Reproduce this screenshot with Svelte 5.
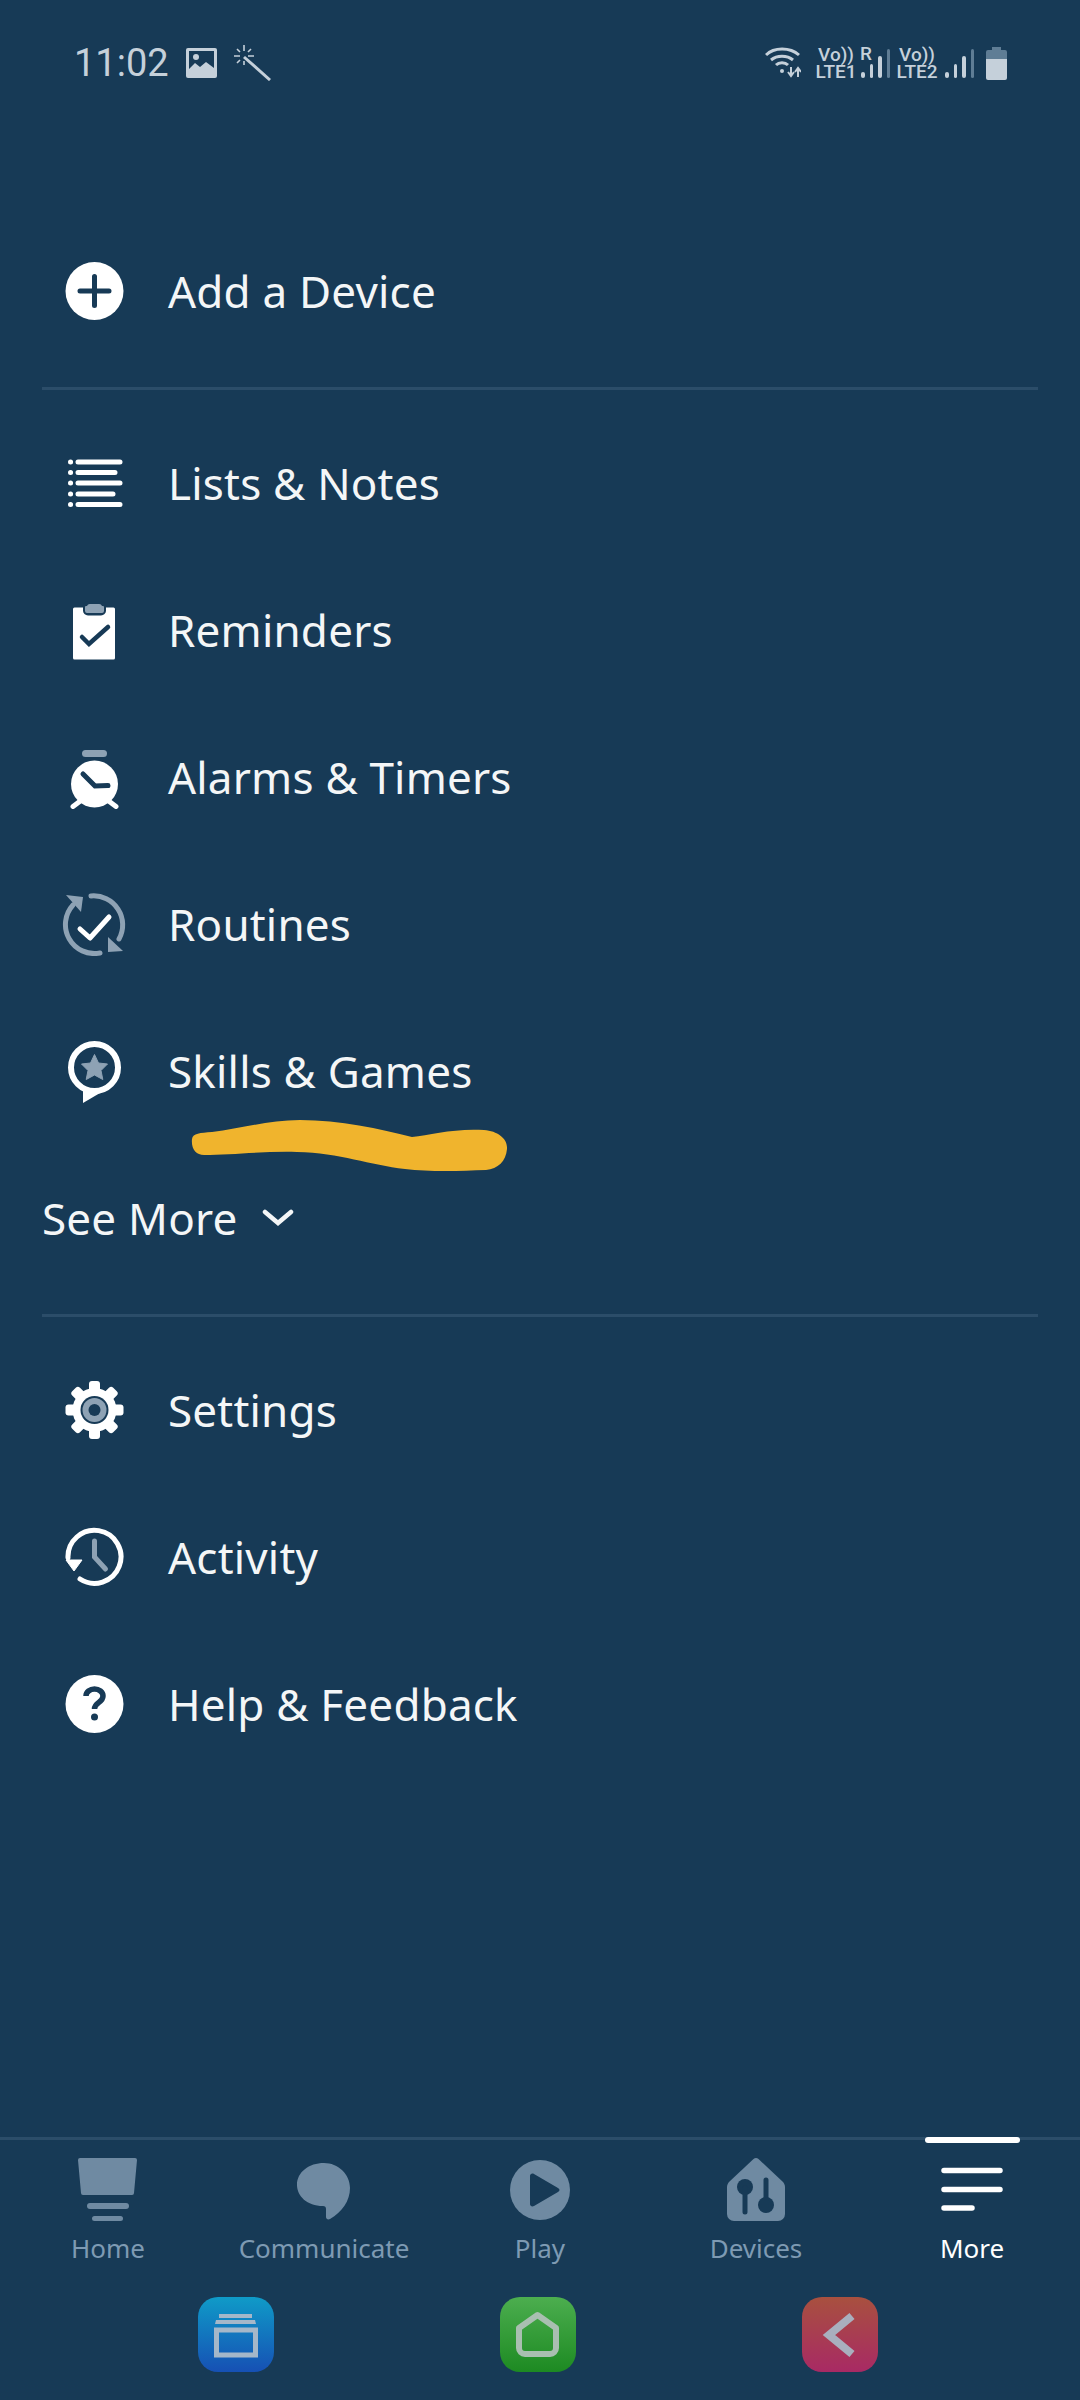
<script>
  const tabs = ["Home", "Communicate", "Play", "Devices", "More"];
</script>

<div class="page">
  <div class="status">
    <div class="status-left">
      <span class="time">11:02</span>
      <svg class="pic" width="31" height="30" viewBox="0 0 31 30">
        <rect width="31" height="30" rx="2" fill="#c5d0da" />
        <rect x="3" y="3" width="25" height="24" fill="#173a56" />
        <path d="M3 21l6-6 5 4 6-5 8 6v7H3z" fill="#c5d0da" />
        <circle cx="10" cy="9" r="3" fill="#c5d0da" />
      </svg>
      <svg class="wand" width="38" height="36" viewBox="0 0 38 36" stroke="#c5d0da" fill="none">
        <path d="M10 12L36 35" stroke-width="3" />
        <path d="M10 0v6M10 16v4M0 11h6M14 11h6M3 4l3 3M17 4l-3 3M3 18l3-3" stroke-width="1.6" />
      </svg>
    </div>
    <div class="status-right">
      <svg width="36" height="32" viewBox="0 0 36 32" fill="none" stroke="#c5d0da" stroke-width="3">
        <path d="M1 8C9 0 25 0 34 8M6 13c6-5 16-5 22 0M11 18c3-3 9-3 12 0" />
        <circle cx="17" cy="24" r="2" fill="#c5d0da" stroke="none" />
        <path d="M26 20v8M23 25l3 4 3-4M33 30v-8M30 25l3-4 3 4" stroke-width="2" />
      </svg>
      <div class="sim first-sim"><span>Vo))</span><span>LTE1</span></div>
      <div class="signal">
        <span class="roam">R</span>
        <div class="bars"><i style="height:6px"></i><i style="height:14px"></i><i style="height:22px"></i><i class="off" style="height:29px"></i></div>
      </div>
      <div class="sim second-sim"><span>Vo))</span><span>LTE2</span></div>
      <div class="bars lone"><i style="height:6px"></i><i style="height:14px"></i><i style="height:22px"></i><i class="off" style="height:29px"></i></div>
      <svg class="batt" width="21" height="33" viewBox="0 0 21 33">
        <path d="M6 0h9v3h4a2 2 0 0 1 2 2v7H0V5a2 2 0 0 1 2-2h4z" fill="#5f7d95" />
        <path d="M0 12h21v19a2 2 0 0 1-2 2H2a2 2 0 0 1-2-2z" fill="#c5d0da" />
      </svg>
    </div>
  </div>

  <div class="menu">
    <div class="row first">
      <svg class="icon" viewBox="0 0 64 64">
        <circle cx="32.500" cy="32" r="29" fill="#fff" />
        <path d="M18 32h29M32.500 17.500v29" stroke="#173a56" stroke-width="5" stroke-linecap="round" />
      </svg>
      <span>Add a Device</span>
    </div>
    <div class="divider"></div>

    <div class="row">
      <svg class="icon" viewBox="0 0 64 64" stroke="#fff" stroke-width="5" stroke-linecap="round">
        <path d="M16 11h42M16 21.5h37M16 32h42M16 43h35M16 53.500h42" />
        <path d="M8.500 11h.1M8.500 21.500h.1M8.500 32h.1M8.500 43h.1M8.500 53.500h.1" />
      </svg>
      <span>Lists &amp; Notes</span>
    </div>
    <div class="row">
      <svg class="icon" viewBox="0 0 64 64">
        <path d="M11 11a1.500 1.500 0 0 1 1.500-1.500h39a1.500 1.500 0 0 1 1.500 1.500v49a1.500 1.500 0 0 1-1.500 1.500h-39A1.500 1.500 0 0 1 11 60z" fill="#fff" />
        <rect x="21" y="3.500" width="23" height="14" rx="5" fill="#173a56" />
        <path d="M25 8a3 3 0 0 1 3-2h9a3 3 0 0 1 3 2h1a1 1 0 0 1 1 1v4a2 2 0 0 1-2 2H25a2 2 0 0 1-2-2V9a1 1 0 0 1 1-1z" fill="#8ea2b4" />
        <path d="M20 38l7 7 19-17" transform="translate(0 1)" fill="none" stroke="#173a56" stroke-width="4.500" stroke-linecap="round" />
      </svg>
      <span>Reminders</span>
    </div>
    <div class="row">
      <svg class="icon" viewBox="0 0 64 64">
        <rect x="20" y="5" width="25" height="7" rx="3.500" fill="#8ea2b4" />
        <circle cx="32.500" cy="39" r="23.500" fill="#fff" />
        <path d="M21 29l12 12 13-.5" fill="none" stroke="#173a56" stroke-width="5" stroke-linecap="round" />
        <path d="M11 61.500l8-6M54 61.500l-8-6" stroke="#fff" stroke-width="5" stroke-linecap="round" />
      </svg>
      <span>Alarms &amp; Timers</span>
    </div>
    <div class="row">
      <svg class="icon" viewBox="0 0 64 64" fill="none">
        <path d="M11 13A29 29 0 0 0 38 61" stroke="#8ea2b4" stroke-width="5" stroke-linecap="round" />
        <path d="M4 3l17 2-2 15z" fill="#8ea2b4" />
        <path d="M29 4A29 29 0 0 1 57 47" stroke="#8ea2b4" stroke-width="5" stroke-linecap="round" />
        <path d="M46 45l15 14-15 1z" fill="#8ea2b4" />
        <path d="M18 37l10 9 19-21" stroke="#fff" stroke-width="5" stroke-linecap="round" stroke-linejoin="round" />
      </svg>
      <span>Routines</span>
    </div>
    <div class="row">
      <svg class="icon" viewBox="0 0 64 64">
        <circle cx="32.500" cy="28.500" r="23.500" fill="none" stroke="#fff" stroke-width="6" />
        <path d="M21 48v16l17-10z" fill="#fff" />
        <path d="M32.500 15.500l4 8.500 9 1-6.500 6.500 1.800 9-8.300-4.500-8.300 4.500 1.800-9-6.500-6.500 9-1z" fill="#8ea2b4" stroke="#8ea2b4" stroke-linejoin="round" />
      </svg>
      <span>Skills &amp; Games</span>
    </div>
    <div class="row see">
      <span>See More</span>
      <svg width="32" height="20" viewBox="0 0 32 20" fill="none" stroke="#f4f6f7" stroke-width="4.500" stroke-linecap="round">
        <path d="M3 4l13 11 13-11" />
      </svg>
    </div>
    <div class="divider second"></div>

    <div class="row">
      <svg class="icon" viewBox="0 0 64 64">
        <g fill="#fff">
          <circle cx="32.500" cy="32" r="22" />
          <rect x="27" y="3" width="11" height="58" rx="3" />
          <rect x="27" y="3" width="11" height="58" rx="3" transform="rotate(45 32.500 32)" />
          <rect x="27" y="3" width="11" height="58" rx="3" transform="rotate(90 32.500 32)" />
          <rect x="27" y="3" width="11" height="58" rx="3" transform="rotate(135 32.500 32)" />
        </g>
        <circle cx="32.500" cy="32" r="14" fill="#173a56" />
        <circle cx="32.500" cy="32" r="12" fill="#8ea2b4" />
        <circle cx="32.500" cy="32" r="6" fill="#173a56" />
      </svg>
      <span>Settings</span>
    </div>
    <div class="row">
      <svg class="icon" viewBox="0 0 64 64" fill="none">
        <path d="M6 33A26.500 26.500 0 1 1 18 54" stroke="#fff" stroke-width="5" stroke-linecap="round" />
        <path d="M4 35h16l-8 11z" fill="#fff" stroke="#fff" stroke-linejoin="round" stroke-width="1" />
        <path d="M32.500 16v16l11 12" stroke="#8ea2b4" stroke-width="5" stroke-linecap="round" />
      </svg>
      <span>Activity</span>
    </div>
    <div class="row">
      <svg class="icon" viewBox="0 0 64 64" fill="none">
        <circle cx="32.500" cy="32" r="29" fill="#fff" />
        <path d="M24 24c0-4 4-7 8.500-7s8.500 3 8.500 7c0 7-8.500 6-8.500 13" stroke="#173a56" stroke-width="5.500" />
        <circle cx="32.500" cy="45" r="3.500" fill="#173a56" />
      </svg>
      <span>Help &amp; Feedback</span>
    </div>
  </div>

  <div class="bottom">
    <div class="tabs">
      {#each tabs as tab}
        <div class="tab" class:active={tab === "More"}>
          <svg width="64" height="64" viewBox="0 0 64 64">
            {#if tab === "Home"}
              <path d="M4 0h55a2 2 0 0 1 2 2l-3 33a2 2 0 0 1-2 2H7a2 2 0 0 1-2-2L2 2a2 2 0 0 1 2-2z" fill="#6f8aa2" />
              <rect x="11" y="45" width="42" height="6" rx="3" fill="#6f8aa2" />
              <rect x="16" y="58" width="31" height="5" rx="2.500" fill="#6f8aa2" />
            {:else if tab === "Communicate"}
              <path d="M32 5c14 0 26 11 26 25 0 13-8 24-20 31-2 1-4 0-4-2v-8c0-2-1-3-3-3C15 48 5 38 5 27 5 14 17 5 32 5z" fill="#6f8aa2" />
            {:else if tab === "Play"}
              <circle cx="32" cy="32" r="30" fill="#6f8aa2" />
              <path d="M22 18c0-2 2-3 4-2l24 14c2 1 2 3 0 4L26 48c-2 1-4 0-4-2z" fill="#173a56" />
            {:else if tab === "Devices"}
              <path d="M29.500 1a4 4 0 0 1 5 0L59 24c1 1 2 3 2 5v27a7 7 0 0 1-7 7H10a7 7 0 0 1-7-7V29c0-2 1-4 2-5z" fill="#6f8aa2" />
              <circle cx="21" cy="29" r="8" fill="#173a56" />
              <path d="M21 30v24M42 22v25" stroke="#173a56" stroke-width="5" stroke-linecap="round" />
              <circle cx="42" cy="47" r="8" fill="#173a56" />
            {:else}
              <path d="M4 12.500h56M4 31.500h56M4 50h28" stroke="#fff" stroke-width="5.500" stroke-linecap="round" />
            {/if}
          </svg>
          <span>{tab}</span>
        </div>
      {/each}
      <div class="indicator"></div>
    </div>

    <div class="nav">
      <div class="nav-btn blue">
        <svg width="76" height="75" viewBox="0 0 76 75">
          <path d="M21 17h33v4H21zM18 23h39l1 4H17z" fill="#a5b7c9" />
          <rect x="18.500" y="33" width="39" height="25" fill="none" stroke="#a5b7c9" stroke-width="5" />
        </svg>
      </div>
      <div class="nav-btn green">
        <svg width="76" height="75" viewBox="0 0 76 75">
          <path d="M19 31L37.500 18 56 31v20a6 6 0 0 1-6 6H25a6 6 0 0 1-6-6z" fill="none" stroke="#a9bfb0" stroke-width="6" stroke-linejoin="round" />
        </svg>
      </div>
      <div class="nav-btn red">
        <svg width="76" height="75" viewBox="0 0 76 75">
          <path d="M50 19L27 38l23 19" fill="none" stroke="#a9afbe" stroke-width="8" />
        </svg>
      </div>
    </div>
  </div>

  <svg class="scribble" width="320" height="56" viewBox="0 0 320 56">
    <path d="M2 20C3 14 10 14 22 13 50 10 78 1 110 1 150 1 190 10 222 18 240 16 265 9 294 11 308 12 318 20 317 30 316 42 308 50 296 51 270 52 240 53 215 50 180 46 150 34 107 33 75 32 40 36 14 36 6 36 1 30 2 20z" fill="#f0b42d" />
  </svg>
</div>

<style>
  :global(body) {
    margin: 0;
    background: #173a56;
  }

  .page {
    position: relative;
    width: 1080px;
    height: 2400px;
    background: #173a56;
    display: flex;
    flex-direction: column;
    font-family: "Noto Sans", "Open Sans", sans-serif;
    color: #f4f6f7;
    overflow: hidden;
  }

  .status {
    height: 126px;
    padding: 0 73px 0 74px;
    box-sizing: border-box;
    display: flex;
    justify-content: space-between;
    align-items: center;
    color: #c5d0da;
    font-family: Roboto, sans-serif;
  }

  .status-left {
    display: flex;
    align-items: center;
  }

  .time {
    font-size: 38px;
    margin-right: 17px;
  }

  .wand {
    margin-left: 17px;
  }

  .status-right {
    display: flex;
    align-items: center;
  }

  .sim {
    display: flex;
    flex-direction: column;
    align-items: center;
    font-size: 19px;
    font-weight: 500;
    line-height: 17px;
    width: 42px;
    white-space: nowrap;
  }

  .first-sim {
    margin-left: 14px;
  }

  .second-sim {
    margin-left: 6px;
  }

  .signal {
    position: relative;
    width: 30px;
    height: 32px;
    margin-left: 3px;
  }

  .roam {
    position: absolute;
    left: 0;
    top: -3px;
    font-size: 19px;
    line-height: 19px;
    font-weight: 500;
  }

  .bars {
    position: absolute;
    right: 0;
    bottom: 1px;
    display: flex;
    align-items: flex-end;
    gap: 5px;
  }

  .bars.lone {
    position: static;
    margin-left: 7px;
  }

  .bars i {
    display: block;
    width: 3.500px;
    background: #c5d0da;
    border-radius: 2px;
  }

  .bars i.off {
    background: #5f7d95;
  }

  .batt {
    margin-left: 12px;
  }

  .menu {
    padding: 92px 42px 0;
    display: flex;
    flex-direction: column;
  }

  .row {
    height: 147px;
    display: flex;
    align-items: center;
    font-size: 44px;
    letter-spacing: 0.2px;
    flex-shrink: 0;
  }

  .row.first {
    height: 146px;
  }

  .icon {
    width: 64px;
    height: 64px;
    margin: 0 42px 0 20px;
    flex-shrink: 0;
  }

  .see svg {
    margin-left: 25px;
  }

  .divider {
    height: 3px;
    background: #2b4d69;
    margin: 23px 0 19px;
    flex-shrink: 0;
  }

  .divider.second {
    margin: 23px 0 19px;
  }

  .bottom {
    margin-top: auto;
    display: flex;
    flex-direction: column;
  }

  .tabs {
    position: relative;
    display: flex;
    border-top: 3px solid #2b4d69;
    padding-top: 18px;
  }

  .tab {
    width: 216px;
    display: flex;
    flex-direction: column;
    align-items: center;
    color: #7e9ab3;
    font-size: 26px;
  }

  .tab span {
    line-height: 36px;
    margin-top: 8px;
  }

  .tab.active {
    color: #fff;
  }

  .indicator {
    position: absolute;
    left: 925px;
    top: -3px;
    width: 95px;
    height: 6px;
    border-radius: 3px;
    background: #fff;
  }

  .nav {
    display: flex;
    justify-content: center;
    gap: 226px;
    padding: 31px 4px 28px 0;
  }

  .nav-btn {
    width: 76px;
    height: 75px;
    border-radius: 20px;
  }

  .blue {
    background: linear-gradient(#0f9bc8, #1650b4);
  }

  .green {
    background: linear-gradient(#4cae4f, #1d8a22);
  }

  .red {
    background: linear-gradient(#a8503f, #a82a64);
  }

  .scribble {
    position: absolute;
    left: 190px;
    top: 1119px;
  }
</style>
